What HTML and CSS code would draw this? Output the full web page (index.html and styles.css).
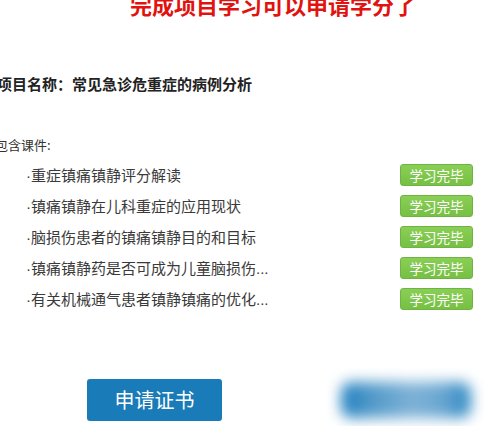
FILE: index.html
```html
<!DOCTYPE html>
<html lang="zh-CN">
<head>
	<meta charset="UTF-8">
	<title>申请学分</title>
	<link rel="stylesheet" href="styles.css">
</head>
<body>
	<section class="page">
		<h1 class="tip">完成项目学习可以申请学分了</h1>
		<p class="project">项目名称：常见急诊危重症的病例分析</p>
		<p class="label">包含课件:</p>
		<ul class="list">
			<li><span class="name">·重症镇痛镇静评分解读</span><a href="javascript:;" class="done">学习完毕</a></li>
			<li><span class="name">·镇痛镇静在儿科重症的应用现状</span><a href="javascript:;" class="done">学习完毕</a></li>
			<li><span class="name">·脑损伤患者的镇痛镇静目的和目标</span><a href="javascript:;" class="done">学习完毕</a></li>
			<li><span class="name">·镇痛镇静药是否可成为儿童脑损伤...</span><a href="javascript:;" class="done">学习完毕</a></li>
			<li><span class="name">·有关机械通气患者镇静镇痛的优化...</span><a href="javascript:;" class="done">学习完毕</a></li>
		</ul>
		<div class="actions">
			<a href="javascript:;" class="apply">申请证书</a>
			<div class="blur"></div>
		</div>
	</section>
</body>
</html>
```

FILE: styles.css
```css
body{
	margin: 0;
	background: #fff;
	font-family: "Noto Sans CJK SC", "Microsoft YaHei", sans-serif;
	overflow: hidden;
}
.page{
	width: 485px;
	height: 426px;
	overflow: hidden;
}
.tip{
	margin: -7px 0 0 130px;
	font-size: 22px;
	line-height: 22px;
	font-weight: bold;
	color: #e1120f;
	white-space: nowrap;
}
.project{
	margin: 61px 0 0 -3px;
	font-size: 15px;
	line-height: 16px;
	font-weight: bold;
	color: #222;
}
.label{
	margin: 45px 0 0 -5px;
	font-size: 13px;
	line-height: 16px;
	color: #333;
}
.list{
	margin: 6px 0 0;
	padding: 0 12px 0 26px;
	list-style: none;
}
.list li{
	height: 31px;
	display: flex;
	align-items: center;
	justify-content: space-between;
}
.name{
	font-family: "Liberation Sans", "Noto Sans CJK SC", sans-serif;
	font-size: 15px;
	color: #3a3a3a;
}
.done{
	width: 73px;
	height: 22px;
	box-sizing: border-box;
	border: 1px solid #6fb443;
	border-radius: 3px;
	background: linear-gradient(#8acf55, #76c044);
	color: #fff;
	font-size: 13.5px;
	line-height: 20px;
	text-align: center;
	text-decoration: none;
}
.actions{
	margin-top: 65px;
	padding-left: 87px;
	display: flex;
	align-items: center;
}
.apply{
	width: 135px;
	height: 42px;
	border-radius: 3px;
	background: #1a7bb9;
	color: #fff;
	font-size: 20px;
	line-height: 42px;
	text-align: center;
	text-decoration: none;
}
.blur{
	width: 130px;
	height: 36px;
	margin-left: 119px;
	border-radius: 10px;
	background: linear-gradient(90deg, #1f7fbf 0%, #4f98c9 22%, #7fb2d6 55%, #6aa7d1 78%, #2a86c2 100%);
	filter: blur(7px);
}
```
